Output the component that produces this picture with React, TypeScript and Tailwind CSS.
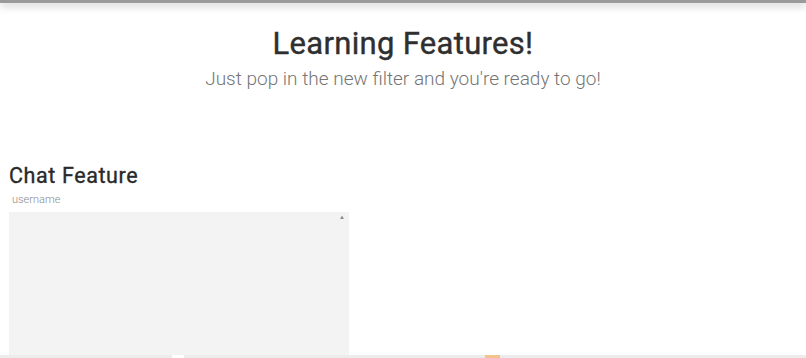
export default function App() {
  return (
    <div className="flex h-[358px] w-[806px] flex-col overflow-hidden bg-white" style={{ fontFamily: 'Roboto, "Liberation Sans", sans-serif' }}>
      <div className="h-[3px] w-full shrink-0 bg-[#9a9a9a] shadow-[0_2px_8px_rgba(0,0,0,0.35)]" />
      <div className="flex flex-col items-center pt-[23px]">
        <h1 className="text-[31px] font-normal leading-[36px] tracking-[0.3px] text-[#2f2f2f] [-webkit-text-stroke:0.4px_#2f2f2f]">Learning Features!</h1>
        <p className="mt-[4px] text-[19px] font-light leading-[26px] text-[#757575]">Just pop in the new filter and you're ready to go!</p>
      </div>
      <div className="flex min-h-0 flex-1 flex-col px-[9px] pt-[71px]">
        <h2 className="text-[21.5px] font-normal leading-[26px] tracking-[0.6px] text-[#2a2a2a] [-webkit-text-stroke:0.35px_#2a2a2a]">Chat Feature</h2>
        <div className="mt-[4px] pl-[3px] text-[11px] font-light leading-[14px] text-[#8a8a8a]">username</div>
        <div className="mt-[5px] flex w-[340px] flex-1 justify-end bg-[#f3f3f3] pr-[4px] pt-[2px]">
          <span className="text-[6px] leading-none text-[#888]">▲</span>
        </div>
      </div>
      <div className="flex h-[3px] w-full shrink-0 bg-[#ececec]">
        <div className="ml-[172px] h-full w-[12px] bg-white" />
        <div className="ml-[301px] h-full w-[15px] bg-[#f2c38c]" />
      </div>
    </div>
  )
}
